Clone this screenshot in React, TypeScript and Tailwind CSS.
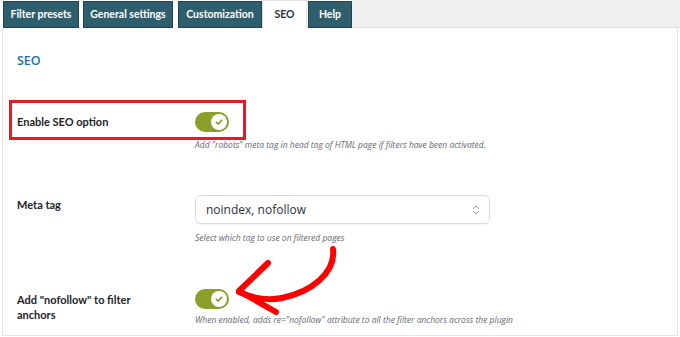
import React from "react";

function Toggle() {
  return (
    <div className="relative w-[34px] h-[20px] rounded-full bg-[#8d9f2b]">
      <div className="absolute right-[2px] top-[2px] w-[16px] h-[16px] rounded-full bg-white flex items-center justify-center">
        <svg width="8" height="8" viewBox="0 0 8 8">
          <path d="M1.3 4.2 L3.2 6 L6.7 2.2" fill="none" stroke="#7c8c22" strokeWidth="1.5" strokeLinecap="round" strokeLinejoin="round" />
        </svg>
      </div>
    </div>
  );
}

function Tab({ label, w, active, ml }: { label: string; w: string; active?: boolean; ml?: string }) {
  return (
    <div
      className={
        (active
          ? "bg-white text-[#2c3338] border-x border-t border-[#e2e2e2] "
          : "bg-[#2f5f6d] text-white border border-[#1f4550] mt-[1px] ") +
        w +
        " " +
        (ml ?? "") +
        " flex items-center justify-center whitespace-nowrap text-[10.5px] font-bold font-['Lato',sans-serif]"
      }
    >
      {label}
    </div>
  );
}

export default function App() {
  return (
    <div className="relative w-[680px] h-[337px] bg-white overflow-hidden font-['Open_Sans',sans-serif] text-[#1d2327]">
      {/* Tabs */}
      <div className="flex h-[28px]">
        <div className="w-[3px]" />
        <Tab label="Filter presets" w="w-[76px]" />
        <Tab label="General settings" w="w-[90px]" ml="ml-[4px]" />
        <Tab label="Customization" w="w-[84px]" ml="ml-[5px]" />
        <Tab label="SEO" w="w-[45px]" active />
        <Tab label="Help" w="w-[44px]" ml="ml-[1px]" />
        <div className="flex-1 bg-[#f0f0f0] border-b border-[#dedede]" />
      </div>

      {/* Content */}
      <div className="ml-[2px] mr-[2px] h-[308px] border-l border-r border-b border-[#e4e4e4] pl-[14px]">
        <div className="pt-[24px] text-[12.5px] font-semibold text-[#2271a1] leading-[18px]">SEO</div>

        {/* Enable SEO */}
        <div className="mt-[42px] flex items-center h-[20px]">
          <div className="w-[178px] text-[11px] font-bold font-['Lato',sans-serif]">Enable SEO option</div>
          <Toggle />
        </div>
        <div className="ml-[178px] mt-[6px] text-[8.5px] italic text-[#646970] leading-[14px]">
          Add "robots" meta tag in head tag of HTML page if filters have been activated.
        </div>

        {/* Meta tag */}
        <div className="mt-[43px] flex items-start">
          <div className="w-[178px] pt-[2px] text-[11px] font-bold font-['Lato',sans-serif]">Meta tag</div>
          <div className="w-[295px] h-[29px] rounded-[5px] border border-[#dcdcde] flex items-center justify-between pl-[10px] pr-[9px] shadow-[0_1px_1px_rgba(0,0,0,0.04)]">
            <span className="text-[12px] text-[#2c3338]">noindex, nofollow</span>
            <svg width="8" height="12" viewBox="0 0 8 12">
              <path d="M1.5 4.5 L4 2 L6.5 4.5 M1.5 7.5 L4 10 L6.5 7.5" fill="none" stroke="#8c8f94" strokeWidth="1" strokeLinecap="round" strokeLinejoin="round" />
            </svg>
          </div>
        </div>
        <div className="ml-[178px] mt-[7px] text-[8.5px] italic text-[#646970] leading-[14px]">
          Select which tag to use on filtered pages
        </div>

        {/* nofollow */}
        <div className="mt-[44px] flex items-start">
          <div className="w-[178px] pt-[3px] text-[11px] font-bold leading-[15px] font-['Lato',sans-serif]">
            Add "nofollow" to filter
            <br />
            anchors
          </div>
          <Toggle />
        </div>
        <div className="ml-[178px] mt-[-9px] text-[8.5px] italic text-[#646970] leading-[14px]">
          When enabled, adds re="nofollow" attribute to all the filter anchors across the plugin
        </div>
      </div>

      {/* Annotation: red box */}
      <div className="absolute left-[9px] top-[100px] w-[237px] h-[40px] border-[3px] border-[#e31b23]" />

      {/* Annotation: red arrow */}
      <svg className="absolute left-0 top-0 pointer-events-none" width="680" height="337" viewBox="0 0 680 337">
        <path d="M333 249 C 336 273, 311 292, 282 298 C 266 301, 252 298, 239 292" fill="none" stroke="#ff0000" strokeWidth="6" strokeLinecap="round" />
        <path d="M268 263 L 239 291 L 276 312" fill="none" stroke="#ff0000" strokeWidth="6" strokeLinecap="round" strokeLinejoin="round" />
      </svg>
    </div>
  );
}
